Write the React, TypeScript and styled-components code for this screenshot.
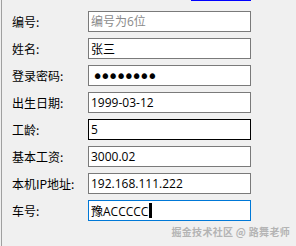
import React from "react";
import styled, { createGlobalStyle } from "styled-components";

const Global = createGlobalStyle`
  html, body { margin: 0; padding: 0; background: #f0f0f0; }
  body { width: 296px; height: 246px; overflow: hidden; }
`;

const Page = styled.div`
  position: relative;
  box-sizing: border-box;
  width: 296px;
  height: 246px;
  margin-left: 1px;
  border-left: 1px solid #a0a0a0;
  padding: 0 0 0 10px;
  font-family: "Noto Sans CJK SC", sans-serif;
  overflow: hidden;
`;

const TopBar = styled.div`
  display: flex;
  justify-content: flex-end;
  width: 239px;
  height: 11px;
`;

const HelpLink = styled.a`
  display: block;
  margin-top: -13px;
  font-size: 12px;
  line-height: 14px;
  color: #0000ff;
  text-decoration: underline;
  cursor: pointer;
`;

const Form = styled.div`
  display: grid;
  grid-template-columns: 76px 163px;
  grid-auto-rows: 21px;
  row-gap: 6px;
  align-items: center;
`;

const Label = styled.label`
  font-size: 12px;
  line-height: 21px;
  color: #000;
  white-space: nowrap;
`;

type Tone = "normal" | "hover" | "focus";

const borderOf = (t: Tone) =>
  t === "hover" ? "#000000" : t === "focus" ? "#0078d7" : "#7a7a7a";

const Field = styled.input<{ $tone?: Tone }>`
  box-sizing: border-box;
  width: 163px;
  height: 21px;
  margin: 0;
  padding: 0 2px;
  border: 1px solid ${(p) => borderOf(p.$tone || "normal")};
  border-radius: 0;
  background: #fff;
  font-family: "Open Sans", "Noto Sans CJK SC", sans-serif;
  font-size: 12px;
  color: #000;
  outline: none;
  &::placeholder { color: #8a8a8a; opacity: 1; }
`;

const Secret = styled(Field)`
  font-family: "DejaVu Sans", sans-serif;
  font-size: 19px;
  letter-spacing: -3.4px;
  padding-left: 3px;
`;

const FocusBox = styled.div`
  box-sizing: border-box;
  width: 163px;
  height: 21px;
  padding: 0 2px;
  display: flex;
  align-items: center;
  border: 1px solid #0078d7;
  background: #fff;
  font-family: "Open Sans", "Noto Sans CJK SC", sans-serif;
  font-size: 12px;
  color: #000;
  white-space: nowrap;
`;

const Caret = styled.span`
  display: inline-block;
  width: 3px;
  height: 15px;
  margin-left: 1px;
  background: #000;
`;

const Watermark = styled.div`
  position: absolute;
  right: 7px;
  bottom: 8px;
  font-family: "Noto Sans CJK SC", sans-serif;
  font-size: 10px;
  font-weight: 700;
  line-height: 12px;
  color: #b4b4b4;
  letter-spacing: 0.3px;
  white-space: nowrap;
`;

export default function App() {
  return (
    <>
      <Global />
      <Page>
        <TopBar>
          <HelpLink>查看源代码</HelpLink>
        </TopBar>
        <Form>
          <Label>编号:</Label>
          <Field placeholder="编号为6位" readOnly />
          <Label>姓名:</Label>
          <Field defaultValue="张三" readOnly />
          <Label>登录密码:</Label>
          <Secret type="password" defaultValue="12345678" readOnly />
          <Label>出生日期:</Label>
          <Field defaultValue="1999-03-12" readOnly />
          <Label>工龄:</Label>
          <Field $tone="hover" defaultValue="5" readOnly />
          <Label>基本工资:</Label>
          <Field defaultValue="3000.02" readOnly />
          <Label>本机IP地址:</Label>
          <Field defaultValue="192.168.111.222" readOnly />
          <Label>车号:</Label>
          <FocusBox>
            豫ACCCCC
            <Caret />
          </FocusBox>
        </Form>
        <Watermark>掘金技术社区 @ 路舞老师</Watermark>
      </Page>
    </>
  );
}
